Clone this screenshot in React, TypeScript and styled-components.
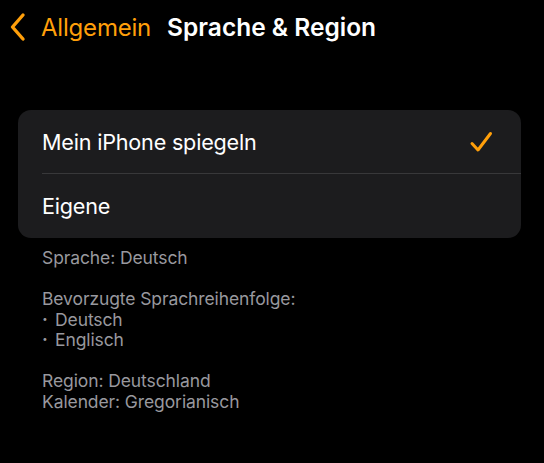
import React from "react";
import styled, { createGlobalStyle } from "styled-components";

const GlobalStyle = createGlobalStyle`
  html, body {
    margin: 0;
    padding: 0;
    background: #000;
  }
  body {
    font-family: Inter, "Noto Sans", "Liberation Sans", sans-serif;
    -webkit-font-smoothing: antialiased;
  }
`;

const Screen = styled.div`
  width: 544px;
  height: 463px;
  background: #000;
  overflow: hidden;
  display: flex;
  flex-direction: column;
`;

const NavBar = styled.div`
  display: flex;
  align-items: center;
  height: 54px;
  padding-left: 9px;
`;

const BackButton = styled.div`
  display: flex;
  align-items: center;
  gap: 14px;
  color: #ff9f0a;
  font-size: 24px;
  letter-spacing: -0.2px;
  cursor: pointer;
`;

const Title = styled.div`
  margin-left: 16px;
  color: #fff;
  font-size: 24.5px;
  font-weight: 600;
  letter-spacing: 0;
`;

const Card = styled.div`
  margin: 56px 23px 0 18px;
  background: #1c1c1e;
  border-radius: 13px;
  overflow: hidden;
`;

const Row = styled.div<{ $divider?: boolean }>`
  height: 64px;
  display: flex;
  align-items: center;
  justify-content: space-between;
  padding: 0 28px 0 24px;
  position: relative;
  color: #fff;
  font-size: 21.6px;
  letter-spacing: -0.2px;

  &::after {
    content: "";
    display: ${(p) => (p.$divider ? "block" : "none")};
    position: absolute;
    left: 24px;
    right: 0;
    bottom: 0;
    height: 1px;
    background: #38383a;
  }
`;

const Footer = styled.div`
  padding: 10px 0 0 42px;
  color: #98989e;
  font-size: 17.5px;
  line-height: 20.5px;
  letter-spacing: -0.1px;
`;

const Line = styled.div<{ $gap?: boolean }>`
  margin-top: ${(p) => (p.$gap ? "20.5px" : "0")};
`;

const Bullet = styled.span`
  display: inline-block;
  width: 13px;
  font-weight: 700;
`;

const Chevron = () => (
  <svg width="18" height="30" viewBox="0 0 18 30">
    <path d="M14 3 L3.5 15 L14 27" fill="none" stroke="#ff9f0a" strokeWidth="3.4" strokeLinecap="round" strokeLinejoin="round" />
  </svg>
);

const Check = () => (
  <svg width="24" height="24" viewBox="0 0 24 24">
    <path d="M3 13.5 L9 20 L21.5 3.5" fill="none" stroke="#ff9f0a" strokeWidth="3" strokeLinecap="round" strokeLinejoin="round" />
  </svg>
);

export default function App() {
  return (
    <>
      <GlobalStyle />
      <Screen>
        <NavBar>
          <BackButton>
            <Chevron />
            <span>Allgemein</span>
          </BackButton>
          <Title>Sprache &amp; Region</Title>
        </NavBar>
        <Card>
          <Row $divider>
            <span>Mein iPhone spiegeln</span>
            <Check />
          </Row>
          <Row>
            <span>Eigene</span>
          </Row>
        </Card>
        <Footer>
          <Line>Sprache: Deutsch</Line>
          <Line $gap>Bevorzugte Sprachreihenfolge:</Line>
          <Line>
            <Bullet>·</Bullet>Deutsch
          </Line>
          <Line>
            <Bullet>·</Bullet>Englisch
          </Line>
          <Line $gap>Region: Deutschland</Line>
          <Line>Kalender: Gregorianisch</Line>
        </Footer>
      </Screen>
    </>
  );
}
